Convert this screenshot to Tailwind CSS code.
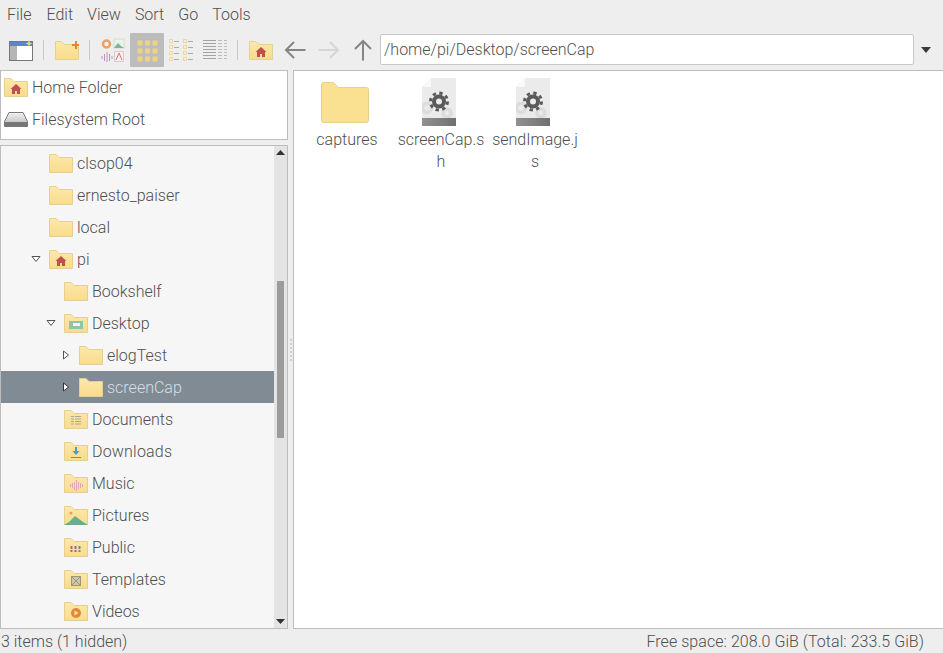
<!DOCTYPE html>
<html lang="en">
<head>
  <meta charset="utf-8" />
  <meta content="width=device-width, initial-scale=1.0" name="viewport" />
  <title>screenCap</title>
  <script src="https://cdn.jsdelivr.net/npm/@tailwindcss/browser@4"></script>
</head>
<body class="bg-[#eeeeee] text-[#4f4f4f] font-['Roboto',sans-serif] font-light text-[16px] leading-[21px]">
  <!-- shared icons -->
  <svg class="absolute w-0 h-0" aria-hidden="true">
    <defs>
      <linearGradient id="folder-fill" x1="0" y1="0" x2="0" y2="1">
        <stop offset="0" stop-color="#fce8a8" />
        <stop offset="1" stop-color="#f9dc8c" />
      </linearGradient>
      <linearGradient id="band-fill" x1="0" y1="0" x2="1" y2="0">
        <stop offset="0" stop-color="#919191" />
        <stop offset="1" stop-color="#707070" />
      </linearGradient>
      <linearGradient id="drive-fill" x1="0" y1="0" x2="0" y2="1">
        <stop offset="0" stop-color="#f4f4f4" />
        <stop offset="1" stop-color="#b5b5b5" />
      </linearGradient>
    </defs>
    <symbol id="folder" viewBox="0 0 24 24">
      <path d="M.5 3.500h6.500l3 3h13.500v15H.5z" fill="url(#folder-fill)" stroke="#e6cf92" />
    </symbol>
    <symbol id="house" viewBox="0 0 12 12">
      <path d="M6 1 .5 6H2v5h3V8h2v3h3V6h1.500z" fill="#c0504d" />
    </symbol>
    <symbol id="home-folder" viewBox="0 0 24 24">
      <use href="#folder" width="24" height="24" />
      <use href="#house" x="6" y="8" width="12" height="12" />
    </symbol>
    <symbol id="file" viewBox="0 0 34 48">
      <path d="M9 0h25v48H0V9z" fill="#ebebeb" />
      <path d="M9 0v9H0z" fill="#f9f9f9" />
      <circle cx="5" cy="30" r="4.500" fill="none" stroke="#dcdcdc" stroke-width="3.500" />
      <circle cx="25" cy="35" r="4" fill="none" stroke="#dcdcdc" stroke-width="3.500" />
      <path d="M0 40h34v8H0z" fill="url(#band-fill)" />
      <circle cx="17" cy="23.500" r="5" fill="none" stroke="#5a5a5a" stroke-width="4" />
      <circle cx="17" cy="23.500" r="8.500" fill="none" stroke="#5a5a5a" stroke-width="3" stroke-dasharray="3.340 3.340" />
    </symbol>
    <symbol id="tiny-grid" viewBox="0 0 6 6">
      <rect x=".5" y=".5" width="5" height="5" fill="#ecd67c" />
    </symbol>
  </svg>

  <div class="w-[943px] h-[653px] flex flex-col overflow-hidden">
    <!-- Menu bar -->
    <nav class="h-[29px] flex items-center pl-[1px] shrink-0">
      <span class="px-[6px] mr-[3px]">File</span>
      <span class="px-[6px] mr-[2px]">Edit</span>
      <span class="px-[6px] mr-[2px]">View</span>
      <span class="px-[6px] mr-[2px]">Sort</span>
      <span class="px-[6px] mr-[2px]">Go</span>
      <span class="px-[6px]">Tools</span>
    </nav>

    <!-- Toolbar -->
    <div class="h-[41px] flex items-center pl-[4px] shrink-0">
      <button class="w-[34px] h-[34px] flex items-center justify-center">
        <svg width="24" height="24" viewBox="0 0 24 24">
          <rect x=".5" y="3.500" width="23" height="19" fill="#fff" stroke="#777" />
          <rect x="1" y="8" width="7" height="14" fill="#b5b5b5" />
          <rect x="1" y="4" width="22" height="4" fill="#5c85c9" />
          <path d="M20 2l1 2.500 2.500 1-2.500 1-1 2.500-1-2.500-2.500-1 2.500-1z" fill="#f3d26b" />
        </svg>
      </button>
      <div class="w-[12px] h-[34px] flex items-center justify-center"><div class="w-px h-[20px] bg-[#c9c9c9] -ml-[2px]"></div></div>
      <button class="w-[34px] h-[34px] flex items-center justify-center">
        <svg width="24" height="24" viewBox="0 0 24 24">
          <path d="M.5 3.500h6l3 3h14v15H.5z" fill="url(#folder-fill)" stroke="#e6cf92" />
          <path d="M17 6h3V3h2v3h2v2h-2v3h-2V8h-3z" fill="#ee8426" />
        </svg>
      </button>
      <div class="w-[12px] h-[34px] flex items-center justify-center"><div class="w-px h-[20px] bg-[#c9c9c9] -ml-[2px]"></div></div>
      <button class="w-[34px] h-[34px] flex items-center justify-center">
        <svg width="24" height="24" viewBox="0 0 24 24">
          <circle cx="5.500" cy="6" r="3.500" fill="none" stroke="#eba066" stroke-width="2.500" />
          <rect x="13" y="1" width="10" height="9" fill="#eef3ea" stroke="#d4dccf" />
          <path d="M13 10l4-5 3 3 3 2z" fill="#7db49c" />
          <path d="M1 18v3M3.500 16v7M6 14v10M8.500 16v7M11 18v3" stroke="#bb92c2" fill="none" />
          <rect x="13.500" y="13.500" width="9" height="10" fill="#fbeeee" stroke="#e6c8c8" />
          <path d="M15 22l3-7 3 7" stroke="#cf7d7a" fill="none" />
        </svg>
      </button>
      <button class="w-[34px] h-[34px] flex items-center justify-center bg-[#bcbcbc] rounded-[1px]">
        <svg width="24" height="24" viewBox="0 0 24 24">
          <use href="#tiny-grid" x="2" y="2" width="6" height="6" /><use href="#tiny-grid" x="9.500" y="2" width="6" height="6" /><use href="#tiny-grid" x="17" y="2" width="6" height="6" />
          <use href="#tiny-grid" x="2" y="10" width="6" height="6" /><use href="#tiny-grid" x="9.500" y="10" width="6" height="6" /><use href="#tiny-grid" x="17" y="10" width="6" height="6" />
          <use href="#tiny-grid" x="2" y="18" width="6" height="6" /><use href="#tiny-grid" x="9.500" y="18" width="6" height="6" /><use href="#tiny-grid" x="17" y="18" width="6" height="6" />
        </svg>
      </button>
      <button class="w-[34px] h-[34px] flex items-center justify-center">
        <svg width="26" height="24" viewBox="0 0 26 24">
          <g fill="#fdf0c6" stroke="#ead9a6">
            <rect x="1.500" y="1.500" width="3" height="3" /><rect x="1.500" y="7.500" width="3" height="3" /><rect x="1.500" y="13.500" width="3" height="3" /><rect x="1.500" y="19.500" width="3" height="3" />
            <rect x="15.500" y="1.500" width="3" height="3" /><rect x="15.500" y="7.500" width="3" height="3" /><rect x="15.500" y="13.500" width="3" height="3" /><rect x="15.500" y="19.500" width="3" height="3" />
          </g>
          <path d="M6 3.500h5M6 9.500h5M6 15.500h5M6 21.500h5M20 3.500h5M20 9.500h5M20 15.500h5M20 21.500h5" stroke="#ababab" fill="none" />
        </svg>
      </button>
      <button class="w-[34px] h-[34px] flex items-center justify-center">
        <svg width="24" height="24" viewBox="0 0 24 24">
          <path d="M0 2.500h13M0 5.500h13M0 8.500h13M0 11.500h13M0 14.500h13M0 17.500h13M0 20.500h13" stroke="#a3a3a3" fill="none" />
          <path d="M15 2.500h4M15 5.500h4M15 8.500h4M15 11.500h4M15 14.500h4M15 17.500h4M15 20.500h4M21 2.500h3M21 5.500h3M21 8.500h3M21 11.500h3M21 14.500h3M21 17.500h3M21 20.500h3" stroke="#bdbdbd" fill="none" />
        </svg>
      </button>
      <div class="w-[12px] h-[34px] flex items-center justify-center"><div class="w-px h-[20px] bg-[#c9c9c9] -ml-[2px]"></div></div>
      <button class="w-[34px] h-[34px] flex items-center justify-center">
        <svg width="24" height="24"><use href="#home-folder" width="24" height="24" /></svg>
      </button>
      <button class="w-[34px] h-[34px] flex items-center justify-center">
        <svg width="24" height="24" viewBox="0 0 24 24"><path d="M22.500 12H3M11 4l-8 8 8 8" fill="none" stroke="#858585" stroke-width="2" /></svg>
      </button>
      <button class="w-[34px] h-[34px] flex items-center justify-center">
        <svg width="24" height="24" viewBox="0 0 24 24"><path d="M1.500 12H21M13 4l8 8-8 8" fill="none" stroke="#d6d6d6" stroke-width="2" /></svg>
      </button>
      <button class="w-[34px] h-[34px] flex items-center justify-center">
        <svg width="24" height="24" viewBox="0 0 24 24"><path d="M12 22.500V3M4 11l8-8 8 8" fill="none" stroke="#858585" stroke-width="2" /></svg>
      </button>
      <div class="w-[534px] h-[31px] bg-white border border-[#c8c8c8] rounded-[2px] flex items-center pl-[3px]">/home/pi/Desktop/screenCap</div>
      <div class="flex-1 flex justify-center pr-[5px]">
        <svg width="10" height="6" viewBox="0 0 10 6"><path d="M0 0h10L5 6z" fill="#3a3a3a" /></svg>
      </div>
    </div>

    <!-- Main area -->
    <div class="flex-1 min-h-0 flex">
      <!-- Side pane -->
      <aside class="w-[288px] shrink-0 flex flex-col">
        <!-- Places -->
        <div class="h-[70px] shrink-0 bg-white border border-[#bdbdbd] pl-[3px]">
          <div class="h-8 flex items-center gap-[4px]">
            <svg width="24" height="24"><use href="#home-folder" width="24" height="24" /></svg>
            <span>Home Folder</span>
          </div>
          <div class="h-8 flex items-center gap-[4px]">
            <svg width="24" height="24" viewBox="0 0 24 24">
              <path d="M5 5.500h14l4.500 9v5H.5v-5z" fill="url(#drive-fill)" stroke="#777" />
              <path d="M1 15h22v4H1z" fill="#777" />
            </svg>
            <span>Filesystem Root</span>
          </div>
        </div>

        <!-- Directory tree -->
        <div class="mt-[5px] flex-1 min-h-0 flex bg-[#f6f6f6] border border-[#bdbdbd]">
          <div class="flex-1 min-w-0 pt-[1px]">
            <div class="h-8 flex items-center pl-[27px]"><span class="w-[21px]"></span><svg class="mr-[4px]" width="24" height="24"><use href="#folder" width="24" height="24" /></svg><span>clsop04</span></div>
            <div class="h-8 flex items-center pl-[27px]"><span class="w-[21px]"></span><svg class="mr-[4px]" width="24" height="24"><use href="#folder" width="24" height="24" /></svg><span>ernesto_paiser</span></div>
            <div class="h-8 flex items-center pl-[27px]"><span class="w-[21px]"></span><svg class="mr-[4px]" width="24" height="24"><use href="#folder" width="24" height="24" /></svg><span>local</span></div>
            <div class="h-8 flex items-center pl-[27px]">
              <span class="w-[21px]"><svg class="block ml-[3px]" width="10" height="6" viewBox="0 0 10 6"><path d="M1 .5h8L5 5.500z" fill="#fff" stroke="#555" /></svg></span>
              <svg class="mr-[4px]" width="24" height="24"><use href="#home-folder" width="24" height="24" /></svg><span>pi</span>
            </div>
            <div class="h-8 flex items-center pl-[42px]"><span class="w-[21px]"></span><svg class="mr-[4px]" width="24" height="24"><use href="#folder" width="24" height="24" /></svg><span>Bookshelf</span></div>
            <div class="h-8 flex items-center pl-[42px]">
              <span class="w-[21px]"><svg class="block ml-[3px]" width="10" height="6" viewBox="0 0 10 6"><path d="M1 .5h8L5 5.500z" fill="#fff" stroke="#555" /></svg></span>
              <svg class="mr-[4px]" width="24" height="24" viewBox="0 0 24 24">
                <use href="#folder" width="24" height="24" />
                <rect x="5" y="10" width="14" height="8" fill="#8cc6a8" />
                <rect x="9" y="12" width="7" height="3" fill="#f3f3f3" />
              </svg><span>Desktop</span>
            </div>
            <div class="h-8 flex items-center pl-[57px]">
              <span class="w-[21px]"><svg class="block ml-[5px]" width="6" height="10" viewBox="0 0 6 10"><path d="M.5 1v8l5-4z" fill="#fff" stroke="#555" /></svg></span>
              <svg class="mr-[4px]" width="24" height="24"><use href="#folder" width="24" height="24" /></svg><span>elogTest</span>
            </div>
            <div class="h-8 flex items-center pl-[57px] bg-[#808b94] text-[#d9dfe3]">
              <span class="w-[21px]"><svg class="block ml-[5px]" width="6" height="10" viewBox="0 0 6 10"><path d="M.5 1v8l5-4z" fill="#fff" stroke="#333" /></svg></span>
              <svg class="mr-[4px]" width="24" height="24"><use href="#folder" width="24" height="24" /></svg><span>screenCap</span>
            </div>
            <div class="h-8 flex items-center pl-[42px]"><span class="w-[21px]"></span>
              <svg class="mr-[4px]" width="24" height="24" viewBox="0 0 24 24"><use href="#folder" width="24" height="24" /><path d="M7 9.500h10M7 12h10M7 14.500h10M7 17h10" stroke="#aaa894" fill="none" /><path d="M10.500 9v9" stroke="#fbe29a" fill="none" /></svg><span>Documents</span>
            </div>
            <div class="h-8 flex items-center pl-[42px]"><span class="w-[21px]"></span>
              <svg class="mr-[4px]" width="24" height="24" viewBox="0 0 24 24"><use href="#folder" width="24" height="24" /><path d="M11 8h2v4h2.500L12 16l-3.500-4H11z" fill="#4a9cc7" /><path d="M7 18.500h10" stroke="#4a9cc7" /></svg><span class="tracking-[0.2px]">Downloads</span>
            </div>
            <div class="h-8 flex items-center pl-[42px]"><span class="w-[21px]"></span>
              <svg class="mr-[4px]" width="24" height="24" viewBox="0 0 24 24"><use href="#folder" width="24" height="24" /><path d="M6.500 13v3M8.500 12v5M10.500 11v8M12.500 9v11M14.500 11v7M16.500 12v5M18.500 13v3" stroke="#e0a6b4" fill="none" /></svg><span>Music</span>
            </div>
            <div class="h-8 flex items-center pl-[42px]"><span class="w-[21px]"></span>
              <svg class="mr-[4px]" width="24" height="24" viewBox="0 0 24 24"><use href="#folder" width="24" height="24" /><circle cx="7" cy="10" r="1.500" fill="#eda04b" /><path d="M0 22l5-3 6-6 8 6 5 3z" fill="#6bab90" /></svg><span>Pictures</span>
            </div>
            <div class="h-8 flex items-center pl-[42px]"><span class="w-[21px]"></span>
              <svg class="mr-[4px]" width="24" height="24" viewBox="0 0 24 24"><use href="#folder" width="24" height="24" /><path d="M7.500 11v6" stroke="#c2616a" stroke-width="2" fill="none" /><path d="M11.500 11v6" stroke="#8f6aa0" stroke-width="2" fill="none" /><path d="M15.500 11v6" stroke="#6f8f86" stroke-width="2" fill="none" /><path d="M6 14.500h11" stroke="#fbe29a" fill="none" /></svg><span>Public</span>
            </div>
            <div class="h-8 flex items-center pl-[42px]"><span class="w-[21px]"></span>
              <svg class="mr-[4px]" width="24" height="24" viewBox="0 0 24 24"><use href="#folder" width="24" height="24" /><rect x="7.500" y="9.500" width="9" height="9" fill="#cfc7aa" stroke="#9d967f" /><path d="M8 10l8 8M16 10l-8 8" stroke="#9d967f" /></svg><span>Templates</span>
            </div>
            <div class="h-8 flex items-center pl-[42px]"><span class="w-[21px]"></span>
              <svg class="mr-[4px]" width="24" height="24" viewBox="0 0 24 24"><use href="#folder" width="24" height="24" /><circle cx="12" cy="14" r="5" fill="#e08a3c" /><path d="M10.500 11.500v5l4-2.500z" fill="#fbe29a" /></svg><span>Videos</span>
            </div>
          </div>
          <!-- Scrollbar -->
          <div class="w-[13px] shrink-0 bg-[#e4e4e4] flex flex-col items-center relative">
            <svg class="mt-[4px]" width="9" height="5" viewBox="0 0 9 5"><path d="M4.500 0 9 5H0z" fill="#333" /></svg>
            <div class="absolute top-[135px] left-[3px] w-[7px] h-[157px] bg-[#9c9c9c]"></div>
            <svg class="mt-auto mb-[4px]" width="9" height="5" viewBox="0 0 9 5"><path d="M0 0h9L4.500 5z" fill="#333" /></svg>
          </div>
        </div>
      </aside>

      <!-- Drag handle -->
      <div class="w-[5px] shrink-0 flex flex-col items-center justify-center gap-[2px]">
        <span class="w-[2px] h-[2px] bg-[#cfcfcf]"></span><span class="w-[2px] h-[2px] bg-[#cfcfcf]"></span><span class="w-[2px] h-[2px] bg-[#cfcfcf]"></span><span class="w-[2px] h-[2px] bg-[#cfcfcf]"></span><span class="w-[2px] h-[2px] bg-[#cfcfcf]"></span><span class="w-[2px] h-[2px] bg-[#cfcfcf]"></span>
      </div>

      <!-- Icon view -->
      <main class="flex-1 min-w-0 bg-white border border-[#bdbdbd] border-r-0 flex items-start pl-[6px] pt-[7px] leading-[22px]">
        <div class="w-[94px] flex flex-col items-center text-center">
          <svg class="mr-[4px]" width="48" height="48" viewBox="0 0 48 48">
            <path d="M.5 6.500a2 2 0 0 1 2-2h10l5 5h28a2 2 0 0 1 2 2v31a2 2 0 0 1-2 2h-43a2 2 0 0 1-2-2z" fill="#fae091" stroke="#e8cf8e" />
          </svg>
          <span class="w-[90px] break-all mt-[3px]">captures</span>
        </div>
        <div class="w-[94px] flex flex-col items-center text-center">
          <svg class="mr-[4px]" width="34" height="48"><use href="#file" width="34" height="48" /></svg>
          <span class="w-[90px] break-all mt-[3px]">screenCap.sh</span>
        </div>
        <div class="w-[94px] flex flex-col items-center text-center">
          <svg class="mr-[4px]" width="34" height="48"><use href="#file" width="34" height="48" /></svg>
          <span class="w-[90px] break-all mt-[3px]">sendImage.js</span>
        </div>
      </main>
    </div>

    <!-- Status bar -->
    <footer class="h-[24px] shrink-0 flex items-center justify-between pl-[1px] pr-[19px]">
      <span>3 items (1 hidden)</span>
      <span class="tracking-[0.05px]">Free space: 208.0 GiB (Total: 233.5 GiB)</span>
    </footer>
  </div>
</body>
</html>
